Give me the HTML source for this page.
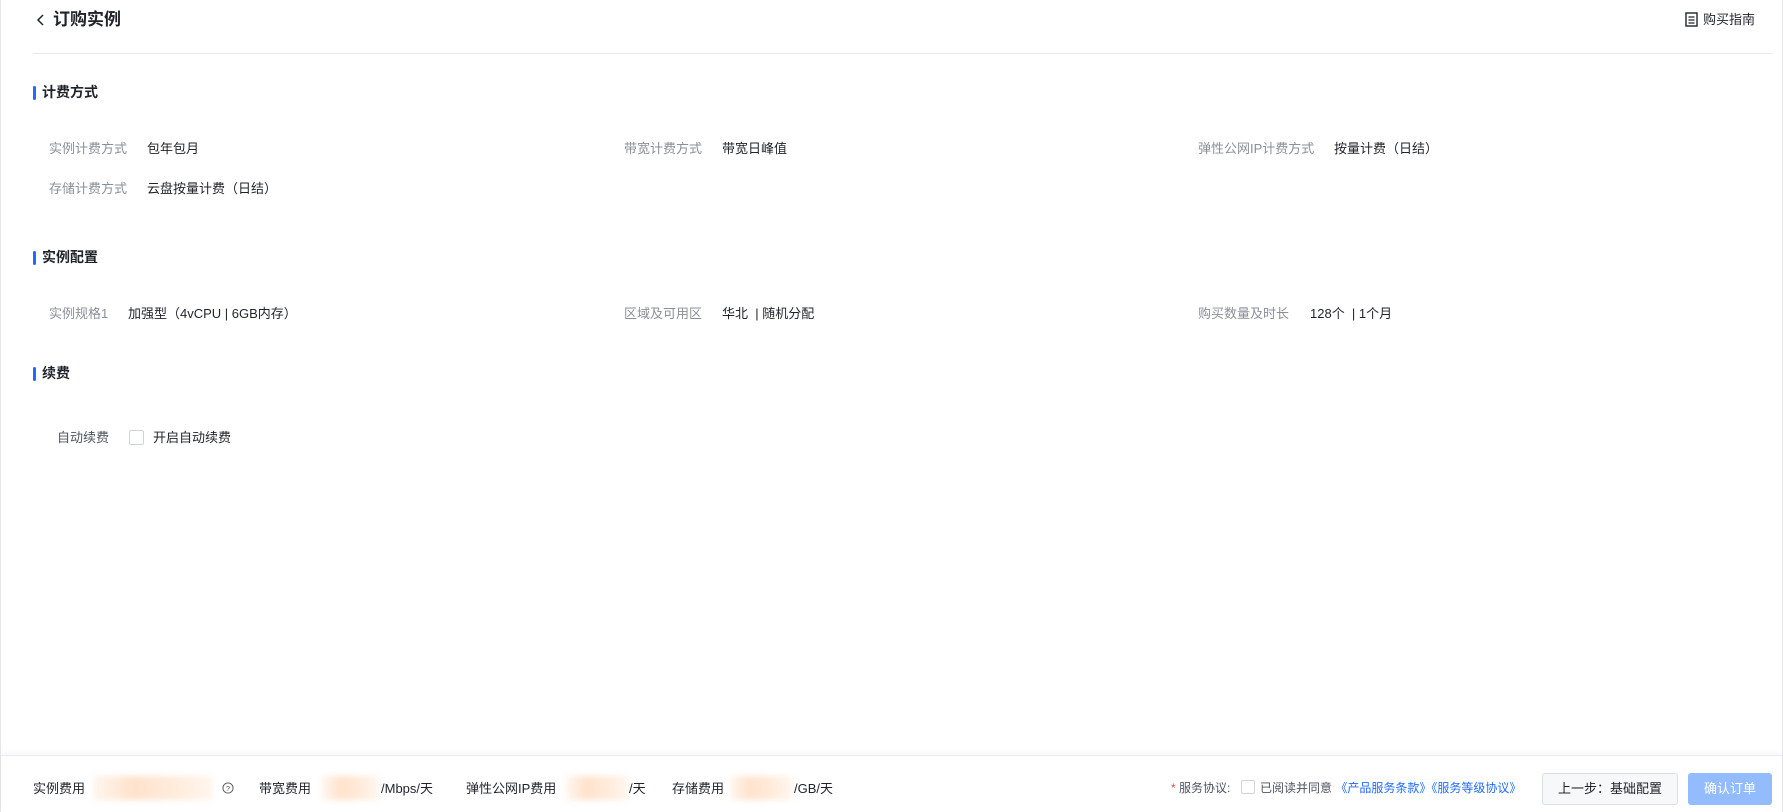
<!DOCTYPE html>
<html><head><meta charset="utf-8"><style>
*{margin:0;padding:0;box-sizing:border-box}
body{width:1783px;height:812px;overflow:hidden;background:#fff;font-family:"Liberation Sans","Noto Sans CJK SC",sans-serif;color:#1f2329;font-size:13px;position:relative}
.frame{position:absolute;left:0;top:0;width:1783px;height:812px;border:1px solid #e5e6e8;border-top:none}
.a{position:absolute;white-space:nowrap;line-height:1}
.lbl{color:#8a9099}
.sec{font-weight:bold;font-size:14px}
.bar{position:absolute;width:3px;height:14px;background:#1f6bff;border-radius:2px}
.blur{position:absolute;height:24px;background:linear-gradient(90deg,#fff6ef,#ffe2cc,#ffebdb,#fff6ef);filter:blur(3px)}
</style></head><body>
<div class="frame"></div>
<svg class="a" style="left:35px;top:13px" width="12" height="14" viewBox="0 0 12 14"><path d="M8 2L3 7l5 5" fill="none" stroke="#1f2329" stroke-width="1.5"/></svg>
<div class="a" style="left:53px;top:11px;font-size:17px;font-weight:bold">订购实例</div>
<svg class="a" style="left:1685px;top:12px" width="13" height="15" viewBox="0 0 13 15"><rect x="1" y="1" width="11" height="13" fill="none" stroke="#1f2329" stroke-width="1.4"/><path d="M3.5 5h6M3.5 8h6M3.5 11h6" stroke="#1f2329" stroke-width="1.2"/></svg>
<div class="a" style="left:1703px;top:13px;font-size:13px">购买指南</div>
<div style="position:absolute;left:33px;top:53px;width:1740px;height:1px;background:#e8e9eb"></div>

<div class="bar" style="left:33px;top:86px"></div>
<div class="a sec" style="left:42px;top:85px">计费方式</div>
<div class="a lbl" style="left:49px;top:142px">实例计费方式</div><div class="a" style="left:147px;top:142px">包年包月</div>
<div class="a lbl" style="left:624px;top:142px">带宽计费方式</div><div class="a" style="left:722px;top:142px">带宽日峰值</div>
<div class="a lbl" style="left:1198px;top:142px">弹性公网IP计费方式</div><div class="a" style="left:1334px;top:142px">按量计费（日结）</div>
<div class="a lbl" style="left:49px;top:182px">存储计费方式</div><div class="a" style="left:147px;top:182px">云盘按量计费（日结）</div>

<div class="bar" style="left:33px;top:251px"></div>
<div class="a sec" style="left:42px;top:250px">实例配置</div>
<div class="a lbl" style="left:49px;top:307px">实例规格1</div><div class="a" style="left:128px;top:307px">加强型（4vCPU | 6GB内存）</div>
<div class="a lbl" style="left:624px;top:307px">区域及可用区</div><div class="a" style="left:722px;top:307px">华北 &nbsp;| 随机分配</div>
<div class="a lbl" style="left:1198px;top:307px">购买数量及时长</div><div class="a" style="left:1310px;top:307px">128个 &nbsp;| 1个月</div>

<div class="bar" style="left:33px;top:367px"></div>
<div class="a sec" style="left:42px;top:366px">续费</div>
<div class="a" style="left:57px;top:431px;color:#4e5560">自动续费</div>
<div style="position:absolute;left:129px;top:430px;width:15px;height:15px;border:1px solid #d0d3d8;border-radius:2px"></div>
<div class="a" style="left:153px;top:431px">开启自动续费</div>

<div style="position:absolute;left:1px;top:755px;width:1781px;height:57px;border-top:1px solid #e8ebf0;box-shadow:0 -2px 6px rgba(0,0,0,.04);background:#fff"></div>
<div class="a" style="left:33px;top:782px">实例费用</div><div class="blur" style="left:93px;top:776px;width:120px"></div>
<svg class="a" style="left:222px;top:782px" width="12" height="12" viewBox="0 0 13 13"><circle cx="6.5" cy="6.5" r="5.5" fill="none" stroke="#555" stroke-width="1"/><text x="6.5" y="9.5" font-size="8" text-anchor="middle" fill="#555" font-family="Liberation Sans">?</text></svg>
<div class="a" style="left:259px;top:782px">带宽费用</div><div class="blur" style="left:322px;top:776px;width:57px"></div><div class="a" style="left:381px;top:782px">/Mbps/天</div>
<div class="a" style="left:466px;top:782px">弹性公网IP费用</div><div class="blur" style="left:566px;top:776px;width:62px"></div><div class="a" style="left:629px;top:782px">/天</div>
<div class="a" style="left:672px;top:782px">存储费用</div><div class="blur" style="left:730px;top:776px;width:62px"></div><div class="a" style="left:794px;top:782px">/GB/天</div>

<div class="a" style="left:1171px;top:782px;font-size:12px;color:#4e5560"><span style="color:#e34d59">*</span> 服务协议:</div>
<div style="position:absolute;left:1241px;top:780px;width:14px;height:14px;border:1px solid #d0d3d8;border-radius:2px"></div>
<div class="a" style="left:1260px;top:782px;font-size:12px;color:#4e5560">已阅读并同意 <span style="color:#1f6bff">《产品服务条款》《服务等级协议》</span></div>
<div style="position:absolute;left:1542px;top:773px;width:136px;height:32px;border:1px solid #dcdfe4;border-radius:3px;background:#f7f8fa;font-size:13px;line-height:30px;text-align:center">上一步：基础配置</div>
<div style="position:absolute;left:1688px;top:773px;width:84px;height:32px;border-radius:3px;background:#93bcff;color:#fff;font-size:13px;line-height:32px;text-align:center">确认订单</div>
</body></html>
